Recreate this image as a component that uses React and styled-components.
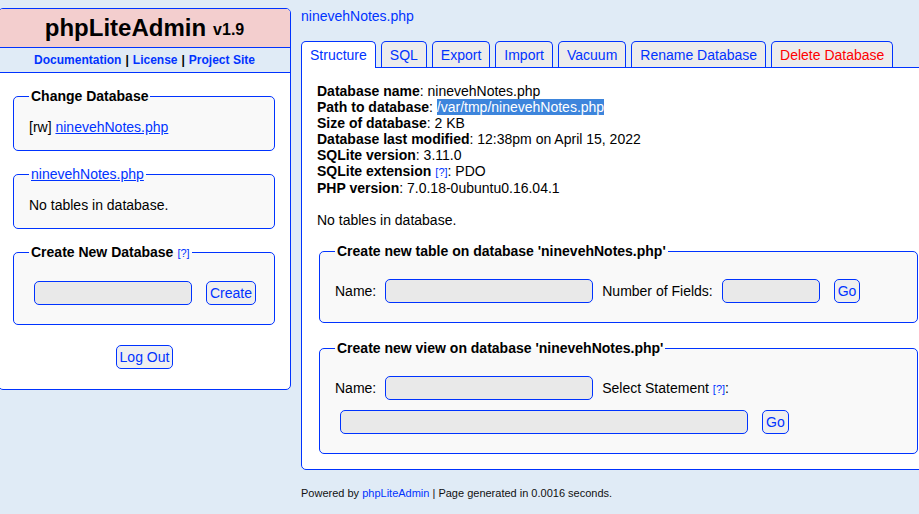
import React from "react";
import styled, { createGlobalStyle } from "styled-components";

const GlobalStyle = createGlobalStyle`
  html {
    overflow: hidden;
  }
  body {
    margin: 8px 0 0 0;
    background: #e0ebf6;
    font-family: "Liberation Sans", Arial, Helvetica, sans-serif;
    font-size: 14px;
    line-height: 16px;
    color: #000;
  }
`;

const Page = styled.div`
  display: flex;
  align-items: flex-start;
`;

/* left navigation */

const LeftNav = styled.div`
  flex: none;
  width: 293px;
  box-sizing: border-box;
  margin-left: -2px;
  background: #fff;
  border: 1px solid #03f;
  border-radius: 5px;
  overflow: hidden;
  padding-bottom: 20px;
`;

const Header = styled.h1`
  margin: 0;
  height: 38px;
  display: flex;
  align-items: center;
  justify-content: center;
  background: #f3cece;
  border-bottom: 1px solid #03f;
  font-size: 24px;
  font-weight: bold;
  line-height: 28px;
  color: #000;
`;

const Version = styled.span`
  font-size: 16px;
  margin-left: 7px;
  padding-top: 4px;
`;

const NavLinks = styled.div`
  height: 24px;
  display: flex;
  align-items: center;
  justify-content: center;
  gap: 4px;
  background: #e0ebf6;
  border-bottom: 1px solid #03f;
  font-size: 12px;
  font-weight: bold;
`;

const NavLink = styled.a`
  color: #03f;
  text-decoration: none;
`;

const Fieldset = styled.fieldset`
  margin: ${(p) => p.$margin || "0"};
  padding: 15px 15px ${(p) => (p.$form ? "14px" : "15px")};
  border: 1px solid #03f;
  border-radius: 5px;
  background: #f9f9f9;
  box-sizing: border-box;
  width: ${(p) => p.$width};
  min-width: 0;
  text-align: left;
`;

const Legend = styled.legend`
  padding: 0 2px;
  font-weight: bold;
  font-size: 14px;
  line-height: 16px;
`;

const LegendLink = styled.a`
  font-weight: normal;
  color: #03f;
  text-decoration: underline;
`;

const Help = styled.a`
  font-size: 11px;
  font-weight: normal;
  color: #03f;
  text-decoration: none;
  margin-left: 4px;
`;

const TextLink = styled.a`
  color: #03f;
  text-decoration: underline;
`;

const FormRow = styled.div`
  height: 34px;
  display: flex;
  align-items: center;
  gap: 4px;
  white-space: nowrap;
`;

const TextInput = styled.input`
  box-sizing: border-box;
  width: ${(p) => p.$width}px;
  height: 24px;
  margin: 0 5px;
  padding: 0 4px;
  border: 1px solid #03f;
  border-radius: 5px;
  background: #e9e9e9;
  font-family: inherit;
  font-size: 14px;
`;

const Button = styled.button`
  box-sizing: border-box;
  height: 24px;
  margin: 0 5px;
  padding: 0 3px;
  border: 1px solid #03f;
  border-radius: 5px;
  background: #efefef;
  color: #03f;
  font-family: inherit;
  font-size: 14px;
  cursor: pointer;
`;

const LogOutRow = styled.div`
  display: flex;
  justify-content: center;
  margin-top: 20px;
`;

/* main content */

const Content = styled.div`
  flex: none;
  margin-left: 10px;
`;

const DbTitle = styled.a`
  display: block;
  color: #03f;
  text-decoration: none;
  font-size: 14px;
  line-height: 16px;
`;

const TabBar = styled.div`
  display: flex;
  gap: 5px;
  margin-top: 17px;
  align-items: flex-end;
`;

const Tab = styled.a`
  position: relative;
  z-index: 1;
  padding: 5px 8px ${(p) => (p.$active ? "5px" : "4px")};
  margin-bottom: ${(p) => (p.$active ? "-1px" : "0")};
  border: 1px solid #03f;
  border-bottom: none;
  border-radius: 5px 5px 0 0;
  background: ${(p) => (p.$active ? "#fff" : "#ececec")};
  color: ${(p) => (p.$danger ? "#f00" : "#03f")};
  font-size: 14px;
  line-height: 16px;
  text-decoration: none;
  white-space: nowrap;
`;

const MainBox = styled.div`
  width: 635px;
  box-sizing: border-box;
  padding: 15px;
  border: 1px solid #03f;
  border-radius: 0 0 5px 5px;
  background: #fff;
`;

const InfoLine = styled.div`
  white-space: nowrap;
`;

const Selected = styled.span`
  background: #3d85dc;
  color: #fff;
`;

const Paragraph = styled.div`
  margin-top: 16px;
`;

const Footer = styled.div`
  margin-top: 17px;
  font-size: 11px;
  line-height: 13px;
  color: #111;
  white-space: nowrap;
`;

const FooterLink = styled.a`
  color: #03f;
  text-decoration: none;
`;

const tabs = [
  "Structure",
  "SQL",
  "Export",
  "Import",
  "Vacuum",
  "Rename Database",
  "Delete Database",
];

export default function App() {
  return (
    <>
      <GlobalStyle />
      <Page>
        <LeftNav>
          <Header>
            phpLiteAdmin<Version>v1.9</Version>
          </Header>
          <NavLinks>
            <NavLink href="#">Documentation</NavLink>|
            <NavLink href="#">License</NavLink>|
            <NavLink href="#">Project Site</NavLink>
          </NavLinks>

          <Fieldset $margin="15px 15px 0 14px" $width="262px">
            <Legend>Change Database</Legend>
            [rw] <TextLink href="#">ninevehNotes.php</TextLink>
          </Fieldset>

          <Fieldset $margin="15px 15px 0 14px" $width="262px">
            <Legend>
              <LegendLink href="#">ninevehNotes.php</LegendLink>
            </Legend>
            No tables in database.
          </Fieldset>

          <Fieldset $margin="15px 15px 0 14px" $width="262px" $form>
            <Legend>
              Create New Database<Help href="#">[?]</Help>
            </Legend>
            <FormRow>
              <TextInput $width={158} />
              <Button>Create</Button>
            </FormRow>
          </Fieldset>

          <LogOutRow>
            <Button>Log Out</Button>
          </LogOutRow>
        </LeftNav>

        <Content>
          <DbTitle href="#">ninevehNotes.php</DbTitle>
          <TabBar>
            {tabs.map((t, i) => (
              <Tab
                key={t}
                href="#"
                $active={i === 0}
                $danger={t === "Delete Database"}
              >
                {t}
              </Tab>
            ))}
          </TabBar>
          <MainBox>
            <InfoLine>
              <b>Database name</b>: ninevehNotes.php
            </InfoLine>
            <InfoLine>
              <b>Path to database</b>: <Selected>/var/tmp/ninevehNotes.php</Selected>
            </InfoLine>
            <InfoLine>
              <b>Size of database</b>: 2 KB
            </InfoLine>
            <InfoLine>
              <b>Database last modified</b>: 12:38pm on April 15, 2022
            </InfoLine>
            <InfoLine>
              <b>SQLite version</b>: 3.11.0
            </InfoLine>
            <InfoLine>
              <b>SQLite extension</b>
              <Help href="#">[?]</Help>: PDO
            </InfoLine>
            <InfoLine>
              <b>PHP version</b>: 7.0.18-0ubuntu0.16.04.1
            </InfoLine>

            <Paragraph>No tables in database.</Paragraph>

            <Fieldset $margin="15px 2px 0" $width="auto" $form>
              <Legend>Create new table on database 'ninevehNotes.php'</Legend>
              <FormRow>
                Name:
                <TextInput $width={208} />
                Number of Fields:
                <TextInput $width={98} />
                <Button>Go</Button>
              </FormRow>
            </Fieldset>

            <Fieldset $margin="17px 2px 0" $width="auto" $form>
              <Legend>Create new view on database 'ninevehNotes.php'</Legend>
              <FormRow>
                Name:
                <TextInput $width={208} />
                <span>
                  Select Statement<Help href="#">[?]</Help>:
                </span>
              </FormRow>
              <FormRow>
                <TextInput $width={408} />
                <Button>Go</Button>
              </FormRow>
            </Fieldset>
          </MainBox>
          <Footer>
            Powered by <FooterLink href="#">phpLiteAdmin</FooterLink> | Page
            generated in 0.0016 seconds.
          </Footer>
        </Content>
      </Page>
    </>
  );
}
